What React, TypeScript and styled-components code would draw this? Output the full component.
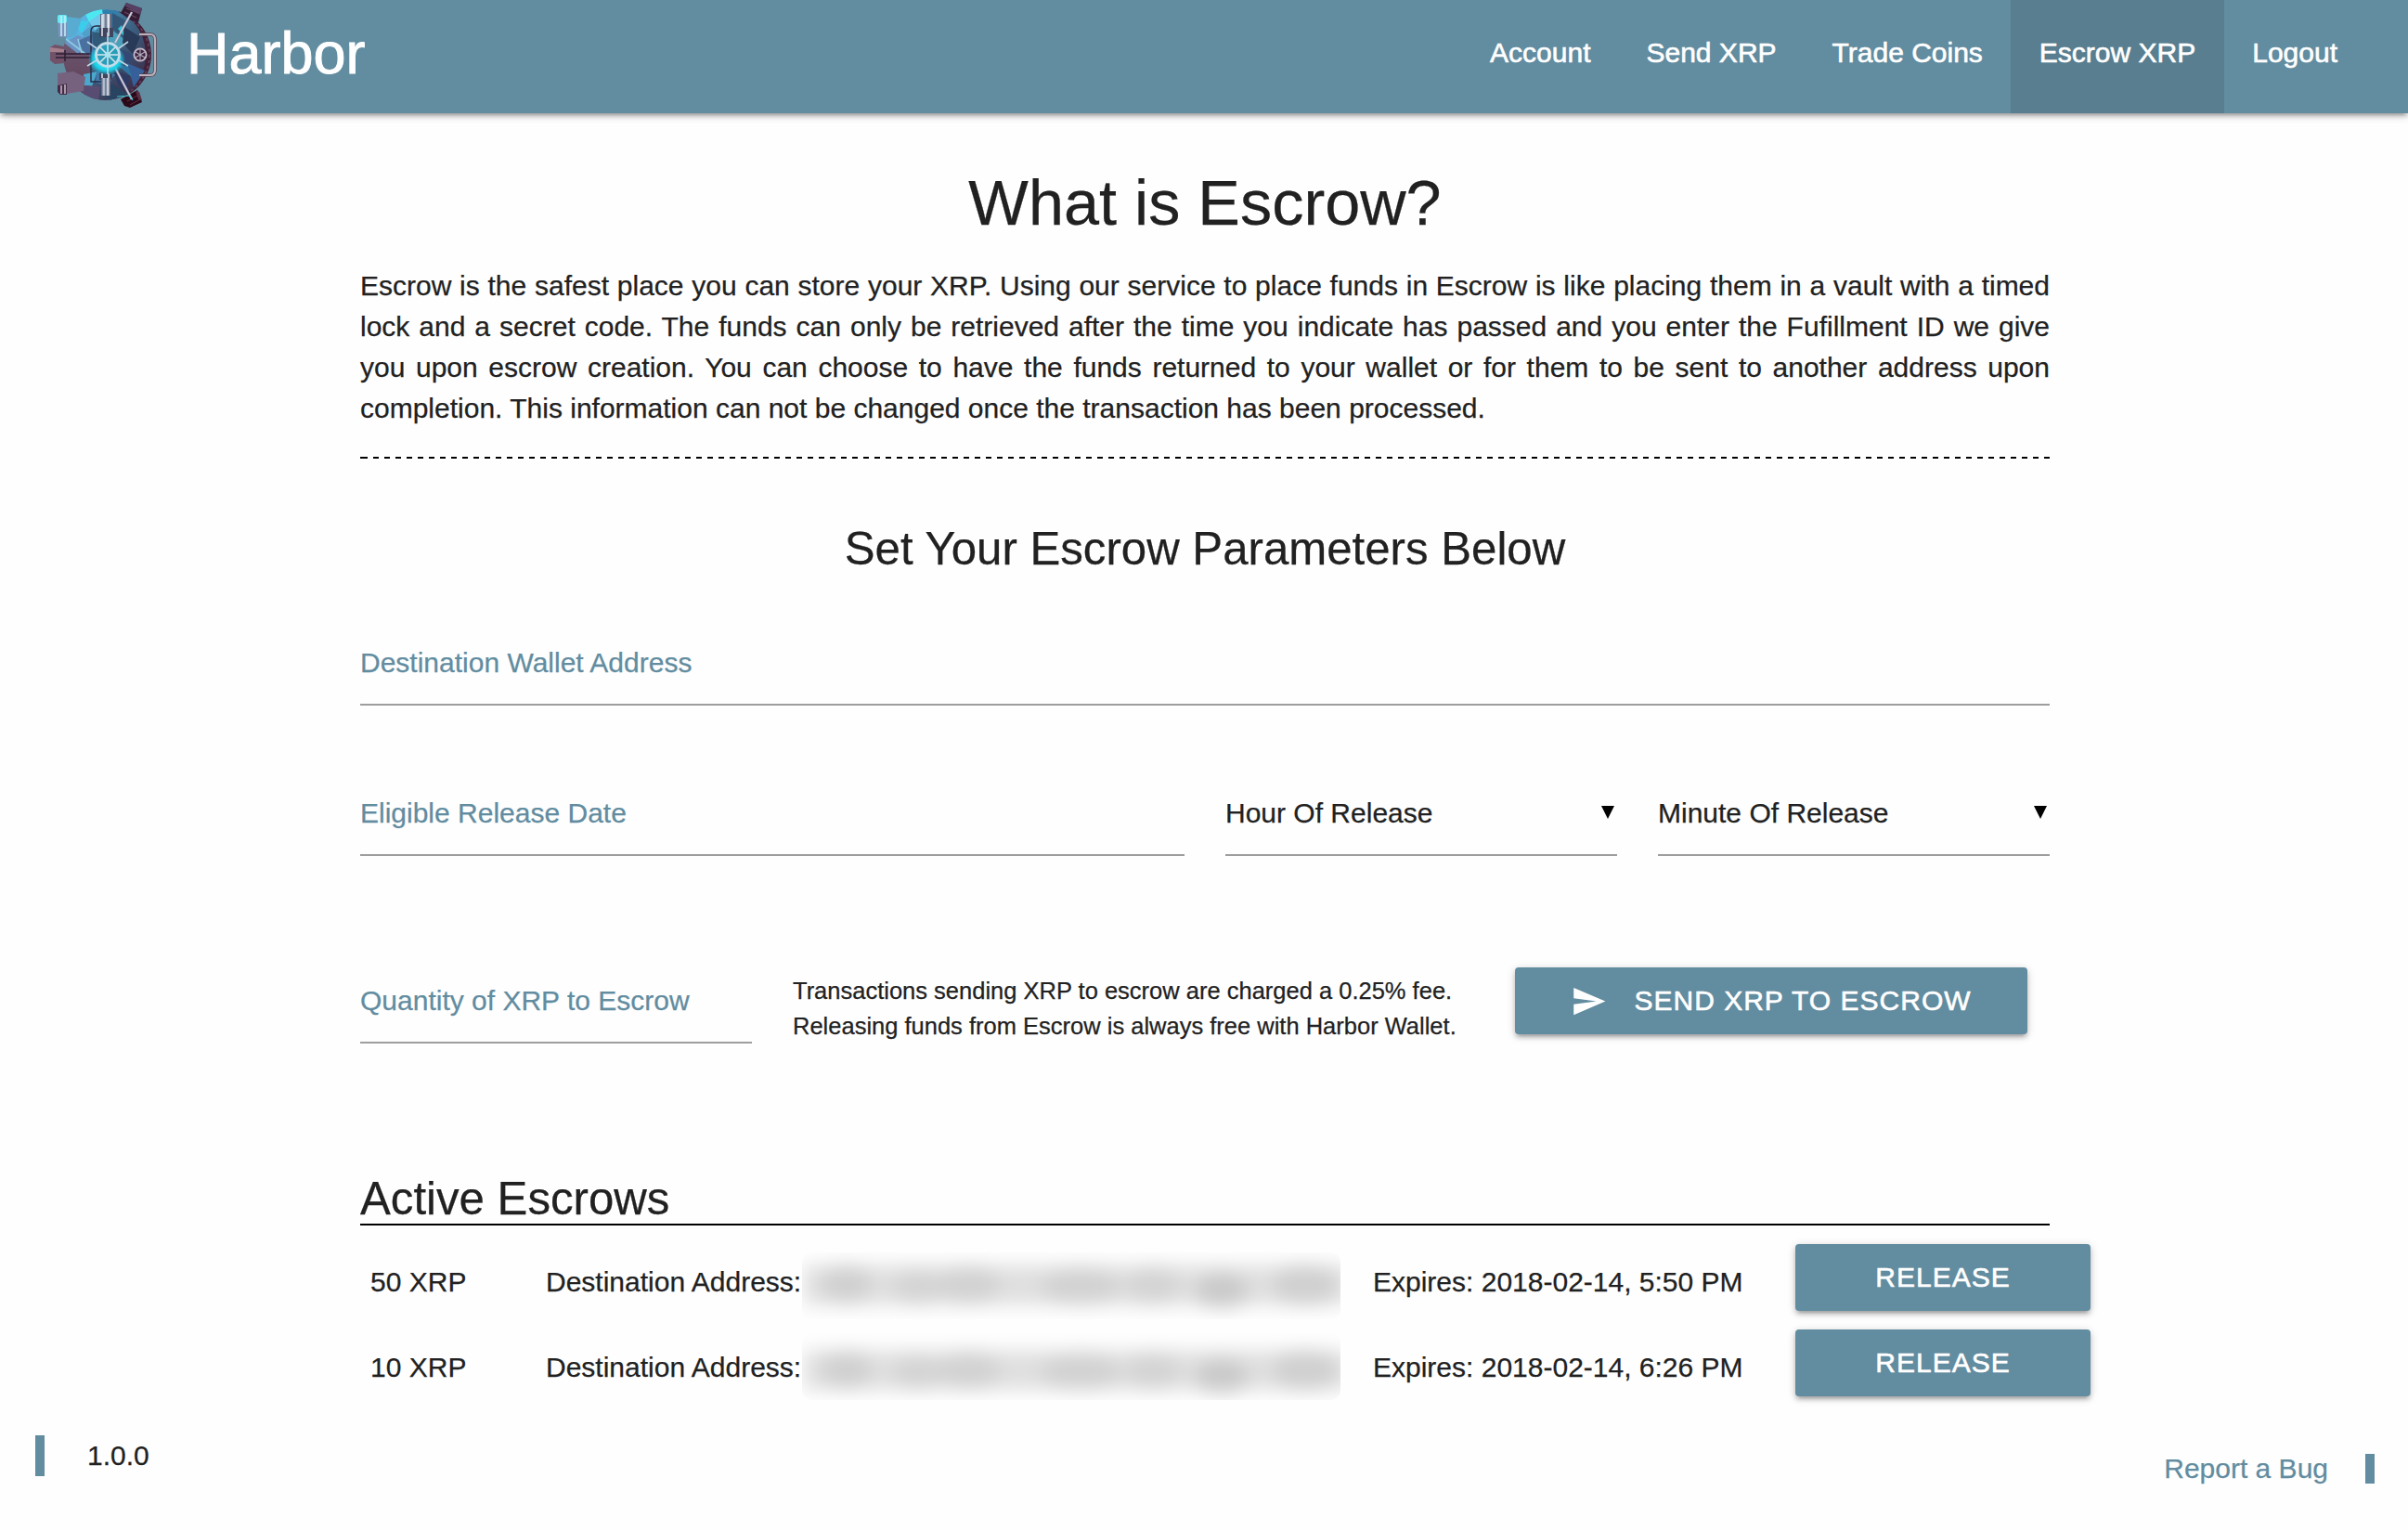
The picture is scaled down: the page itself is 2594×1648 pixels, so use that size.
import React from "react";
import styled, { createGlobalStyle, css } from "styled-components";

const brand = "#628ca0";
const ink = "#212121";

const GlobalStyle = createGlobalStyle`
  *, *::before, *::after { box-sizing: border-box; }
  html, body { margin: 0; padding: 0; background: #fefefe; }
  body {
    font-family: "Liberation Sans", Arial, Helvetica, sans-serif;
    font-size: 30px;
    line-height: 44px;
    color: ${ink};
    -webkit-text-stroke: 0.25px currentColor;
    overflow: hidden;
  }
`;

const raised = css`
  box-shadow: 0 4px 4px 0 rgba(0, 0, 0, 0.14), 0 6px 2px -4px rgba(0, 0, 0, 0.12),
    0 2px 10px 0 rgba(0, 0, 0, 0.2);
`;

const Page = styled.div`
  display: flex;
  flex-direction: column;
  height: 1648px;
`;

const NavBar = styled.header`
  ${raised}
  flex: none;
  height: 122px;
  padding: 0 46px 0 54px;
  display: flex;
  align-items: stretch;
  justify-content: space-between;
  background: ${brand};
  color: #fff;
`;

const Brand = styled.a`
  display: flex;
  align-items: flex-start;
  gap: 32px;
  font-size: 63px;
  line-height: 115px;
  -webkit-text-stroke: 0.9px #fff;
`;

const NavLinks = styled.nav`
  display: flex;
`;

const NavLink = styled.a<{ $active?: boolean }>`
  padding: 0 ${(p) => (p.$active ? 31 : 30)}px;
  line-height: 114px;
  -webkit-text-stroke: 0.6px #fff;
  background: ${(p) => (p.$active ? "#587e90" : "transparent")};
`;

const Main = styled.main`
  width: 1820px;
  margin-left: 388px;
  padding-top: 58px;
`;

const PageTitle = styled.h1`
  margin: 0;
  font-size: 68.4px;
  font-weight: 400;
  line-height: 76px;
  text-align: center;
`;

const Intro = styled.p`
  margin: 30px 0 0;
  text-align: justify;
`;

const Dashes = styled.div`
  height: 2px;
  margin-top: 30px;
  background: linear-gradient(#000, #000) 0 0 / 2px 2px no-repeat,
    repeating-linear-gradient(90deg, #000 0 6px, transparent 6px 12px) 2px 0 no-repeat;
`;

const Subtitle = styled.h2`
  margin: 70px 0 0;
  font-size: 49.2px;
  font-weight: 400;
  line-height: 54px;
  text-align: center;
`;

const FieldRow = styled.div<{ $top: number; $columns: string }>`
  display: grid;
  grid-template-columns: ${(p) => p.$columns};
  column-gap: 44px;
  margin-top: ${(p) => p.$top}px;
`;

const Field = styled.div<{ $dark?: boolean }>`
  display: flex;
  justify-content: space-between;
  align-self: end;
  height: 68px;
  border-bottom: 2px solid #9e9e9e;
  color: ${(p) => (p.$dark ? ink : brand)};
`;

const Caret = styled.span`
  width: 14px;
  height: 14px;
  margin: 14px 3px 0 0;
  background: #000;
  clip-path: polygon(0 0, 100% 0, 50% 100%);
`;

const Note = styled.p`
  margin: 6px 0 0;
  font-size: 25.5px;
  line-height: 38px;
  white-space: nowrap;
`;

const Button = styled.button<{ $width: number }>`
  ${raised}
  display: flex;
  align-items: flex-start;
  justify-content: center;
  width: ${(p) => p.$width}px;
  height: 72px;
  padding: 0;
  border: 0;
  border-radius: 4px;
  background: ${brand};
  color: #fff;
  font: inherit;
  line-height: 71px;
  letter-spacing: 1px;
  -webkit-text-stroke: 0.6px #fff;
`;

const SendIcon = styled.svg`
  width: 39px;
  height: 39px;
  margin: 17px 29px 0 0;
  fill: #fff;
`;

const SectionTitle = styled.h2`
  margin: 140px 0 0;
  border-bottom: 2px solid #000;
  font-size: 49.2px;
  font-weight: 400;
  line-height: 54px;
`;

const EscrowList = styled.div`
  display: grid;
  gap: 20px;
  margin-top: 20px;
`;

const EscrowRow = styled.div`
  display: grid;
  grid-template-columns: 189px 891px 455px 318px;
  height: 72px;
  padding-left: 11px;
  width: 1864px;
`;

const Cell = styled.div`
  display: flex;
  padding-top: 19px;
  white-space: nowrap;
`;

const Redacted = styled.div<{ $shift: number }>`
  flex: none;
  width: 580px;
  height: 72px;
  margin-top: ${(p) => p.$shift - 10}px;
  margin-left: 1px;
  overflow: hidden;
  border-radius: 10px;
`;

const Smudge = styled.svg`
  display: block;
  width: 580px;
  height: 72px;
`;

const Footer = styled.footer`
  display: flex;
  justify-content: space-between;
  align-items: flex-start;
  margin-top: 42px;
  padding: 0 36px 0 38px;
`;

const Version = styled.div`
  border-left: 10px solid ${brand};
  padding-left: 46px;
`;

const BugLink = styled.a`
  margin-top: 20px;
  border-right: 10px solid ${brand};
  padding-right: 40px;
  line-height: 32px;
  color: ${brand};
`;

const spokes = [0, 45, 90, 135];

function VaultLogo() {
  return (
    <svg width="115" height="122" viewBox="54 0 115 122" aria-hidden="true">
      <defs>
        <linearGradient id="steel" x1="0" x2="1">
          <stop offset="0" stopColor="#54536f" />
          <stop offset=".3" stopColor="#c4d5e2" />
          <stop offset=".5" stopColor="#5d6480" />
          <stop offset=".7" stopColor="#e0edf4" />
          <stop offset="1" stopColor="#433f5a" />
        </linearGradient>
        <linearGradient id="door" x1="0" y1="0" x2="1" y2="1">
          <stop offset="0" stopColor="#55b8dc" />
          <stop offset=".5" stopColor="#3c6384" />
          <stop offset="1" stopColor="#3b1b35" />
        </linearGradient>
        <linearGradient id="lower" x1="0" y1="0" x2="0" y2="1">
          <stop offset="0" stopColor="#6f5a74" />
          <stop offset="1" stopColor="#5a3a50" />
        </linearGradient>
        <radialGradient id="glow">
          <stop offset="0" stopColor="#7cf7ff" />
          <stop offset=".7" stopColor="#19cfe6" />
          <stop offset="1" stopColor="#19cfe6" stopOpacity="0" />
        </radialGradient>
        <clipPath id="disc">
          <ellipse cx="114" cy="59" rx="46" ry="49" />
        </clipPath>
      </defs>
      <ellipse cx="117" cy="59" rx="46" ry="48" fill="#41203a" />
      <ellipse cx="117" cy="59" rx="44" ry="46" fill="none" stroke="#6c485f" strokeWidth="1.4" strokeDasharray="3 3" />
      <ellipse cx="113" cy="59" rx="44" ry="49" fill="url(#door)" />
      <path d="M130 14L136 3 153 9 149 24 141 22Z" fill="#351c35" />
      <path d="M134 6L136 3 153 9 151 16Z" fill="#574063" />
      <path d="M136 9L149 14M134 13L147 19" stroke="#6a4f68" strokeWidth="1" />
      <path d="M130 107L148 97 153 110 140 116 134 114Z" fill="#2b0918" />
      <path d="M146 98L150 99 153 108 149 107Z" fill="#5a3247" />
      <path d="M137 109L148 103M140 113L151 107" stroke="#5b3046" strokeWidth="1" />
      <g clipPath="url(#disc)">
        <path d="M66 46L84 44 98 61 96 108 78 105 66 80Z" fill="url(#lower)" />
        <path d="M70 18L92 12 99 32 84 46 70 42Z" fill="#58b3e0" />
        <path d="M91 13L113 8 109 27 96 24Z" fill="#4ce8f1" />
        <path d="M76 21L96 23 88 36Z" fill="#3bcdec" />
        <path d="M109 14L109 27 101 34 96 23Z" fill="#6fc7ea" />
        <path d="M88 36L99 27 106 40 96 49Z" fill="#529fca" />
        <path d="M69 46L84 38 98 44 84 58Z" fill="#6a94c4" />
        <path d="M84 44L102 36 101 60 91 58Z" fill="#4a709f" />
        <path d="M110 10L128 12 121 28 112 25Z" fill="#317eac" />
        <path d="M121 14L137 23 134 42 121 31Z" fill="#355777" />
        <path d="M120 32L135 43 127 56 117 43Z" fill="#4aa0bb" />
        <path d="M127 31L131 27 135 41Z" fill="#2fc3d6" />
        <path d="M134 29L151 40 143 58 132 46Z" fill="#293a59" />
        <path d="M129 53L145 59 137 72 126 69Z" fill="#334974" />
        <path d="M99 34L115 37 116 51 101 53Z" fill="#315978" />
        <path d="M137 68L156 76 144 94Z" fill="#37609a" />
        <path d="M122 75L139 82 137 99 127 90Z" fill="#2d3a64" />
        <path d="M126 70L138 71 142 83Z" fill="#2f75a1" />
        <path d="M90 80L105 77 99 93 91 92Z" fill="#4ba7cc" />
        <path d="M104 77L124 80 116 92 103 89Z" fill="#417bad" />
        <path d="M120 90L138 101 119 108 108 100Z" fill="#284461" />
        <path d="M92 92L108 93 106 108 86 104Z" fill="#594c72" />
        <path d="M71 42L92 58M84 42L88 58" stroke="#8ccbe6" strokeWidth="1.6" />
      </g>
      <path d="M62 20Q62 16 66 16H72V38L78 40H63Z" fill="#7a91bd" />
      <path d="M72 18L88 20 82 38 72 40Z" fill="#58acd2" />
      <rect x="62" y="16" width="10" height="9" rx="2" fill="#66eaf4" />
      <path d="M66 17V39M70 17V39" stroke="#c3edf5" strokeWidth="1.6" />
      <path d="M54 51L59 48 69 50V68L59 69 54 65Z" fill="#715268" />
      <path d="M54 51L69 53V56H54Z" fill="#a47e8b" />
      <path d="M60 58H98M60 62H98M70 54V66" stroke="#2e1e34" strokeWidth="1.5" />
      <path d="M62 79L79 77 92 83 90 98 65 102 62 98Z" fill="#76617f" />
      <path d="M62 92L72 90V102L65 102 62 99Z" fill="#442b45" />
      <path d="M66 92V101M70 91V101" stroke="#c1b3c5" strokeWidth="1.6" />
      <path d="M98 63V34Q98 28 104 28H108M98 63V88H112" fill="none" stroke="#292b44" strokeWidth="1.4" />
      <rect x="108" y="15" width="12" height="25" fill="url(#steel)" />
      <path d="M107 30H122V40H107ZM107 78H121V86H107Z" fill="#40445f" />
      <path d="M110 16V39M117 16V39M110 79V102M117 79V102" stroke="#e1edf4" strokeWidth="1.5" />
      <rect x="109" y="84" width="10" height="19" fill="url(#steel)" />
      <path d="M142 13L124 46M124 73L142 107" stroke="#ada9be" strokeWidth="2.5" />
      <path d="M142 13L124 46M124 73L142 107" stroke="#e6e4ee" strokeWidth=".8" />
      <path d="M126 104L140 103 143 108" fill="none" stroke="#39c5d2" strokeWidth="1.2" />
      <path d="M150 37H162Q167 37 167 43V75Q167 81 162 81H150" fill="none" stroke="#57404f" strokeWidth="3.6" />
      <path d="M150 37H162Q167 37 167 43V75Q167 81 162 81H150" fill="none" stroke="#bab1bd" strokeWidth="2.2" />
      <circle cx="151" cy="59" r="6.6" fill="#3b2340" stroke="#c5bbc9" strokeWidth="1.8" />
      <path d="M146 56L156 62M151 52V66M146 62L156 56" stroke="#b4adbd" strokeWidth="1.1" />
      <ellipse cx="115" cy="64" rx="20" ry="17" fill="url(#glow)" />
      <circle cx="116" cy="59" r="12.5" fill="#2a9eb8" />
      {spokes.map((angle) => (
        <path
          key={angle}
          d="M103 59H129"
          stroke="#c7dfea"
          strokeWidth="1.7"
          transform={`rotate(${angle} 116 59)`}
        />
      ))}
      <path d="M94 45L104 52M94 71L104 65M138 45L128 52M138 71L128 65M116 35V47M116 72V80" stroke="#bed5e2" strokeWidth="1.6" />
      <circle cx="116" cy="59" r="12.5" fill="none" stroke="#c5dce9" strokeWidth="2.8" />
      <circle cx="116" cy="59" r="3" fill="#a8e4ed" />
    </svg>
  );
}

const blobs = [
  [48, 34, 26, 22, 0.07],
  [125, 38, 26, 20, 0.05],
  [180, 35, 32, 22, 0.06],
  [300, 37, 42, 21, 0.06],
  [378, 36, 28, 22, 0.05],
  [452, 43, 28, 20, 0.1],
  [542, 35, 34, 24, 0.07],
];

function HiddenAddress({ shift }: { shift: number }) {
  const offset = -shift;
  return (
    <Redacted $shift={shift}>
      <Smudge viewBox="0 0 580 72" aria-hidden="true">
        <defs>
          <filter id="smudge" x="-10%" y="-60%" width="120%" height="220%">
            <feGaussianBlur stdDeviation="10" />
          </filter>
        </defs>
        <g filter="url(#smudge)" transform={`translate(0 ${offset})`}>
          <rect x="2" y="14" width="586" height="42" fill="#000" fillOpacity="0.12" />
          {blobs.map(([x, y, rx, ry, o]) => (
            <ellipse key={x} cx={x} cy={y} rx={rx} ry={ry} fill="#000" fillOpacity={o} />
          ))}
        </g>
      </Smudge>
    </Redacted>
  );
}

const links = ["Account", "Send XRP", "Trade Coins", "Escrow XRP", "Logout"];

const escrows = [
  { amount: "50 XRP", expires: "2018-02-14, 5:50 PM", shift: 0 },
  { amount: "10 XRP", expires: "2018-02-14, 6:26 PM", shift: -5 },
];

export default function App() {
  return (
    <Page>
      <GlobalStyle />
      <NavBar>
        <Brand>
          <VaultLogo />
          Harbor
        </Brand>
        <NavLinks>
          {links.map((label) => (
            <NavLink key={label} $active={label === "Escrow XRP"}>
              {label}
            </NavLink>
          ))}
        </NavLinks>
      </NavBar>
      <Main>
        <PageTitle>What is Escrow?</PageTitle>
        <Intro>
          Escrow is the safest place you can store your XRP. Using our service to place funds in
          Escrow is like placing them in a vault with a timed lock and a secret code. The funds can
          only be retrieved after the time you indicate has passed and you enter the Fufillment ID
          we give you upon escrow creation. You can choose to have the funds returned to your wallet
          or for them to be sent to another address upon completion. This information can not be
          changed once the transaction has been processed.
        </Intro>
        <Dashes />
        <Subtitle>Set Your Escrow Parameters Below</Subtitle>
        <FieldRow $top={74} $columns="1fr">
          <Field>Destination Wallet Address</Field>
        </FieldRow>
        <FieldRow $top={94} $columns="888px 422px 422px">
          <Field>Eligible Release Date</Field>
          <Field $dark>
            Hour Of Release
            <Caret />
          </Field>
          <Field $dark>
            Minute Of Release
            <Caret />
          </Field>
        </FieldRow>
        <FieldRow $top={120} $columns="422px 734px 552px">
          <Field>Quantity of XRP to Escrow</Field>
          <Note>
            Transactions sending XRP to escrow are charged a 0.25% fee.
            <br />
            Releasing funds from Escrow is always free with Harbor Wallet.
          </Note>
          <Button $width={552}>
            <SendIcon viewBox="0 0 24 24">
              <path d="M2.01 21L23 12 2.01 3 2 10l15 2-15 2z" />
            </SendIcon>
            SEND XRP TO ESCROW
          </Button>
        </FieldRow>
        <SectionTitle>Active Escrows</SectionTitle>
        <EscrowList>
          {escrows.map((escrow) => (
            <EscrowRow key={escrow.amount}>
              <Cell>{escrow.amount}</Cell>
              <Cell>
                Destination Address:
                <HiddenAddress shift={escrow.shift} />
              </Cell>
              <Cell>Expires: {escrow.expires}</Cell>
              <Button $width={318}>RELEASE</Button>
            </EscrowRow>
          ))}
        </EscrowList>
      </Main>
      <Footer>
        <Version>1.0.0</Version>
        <BugLink>Report a Bug</BugLink>
      </Footer>
    </Page>
  );
}
